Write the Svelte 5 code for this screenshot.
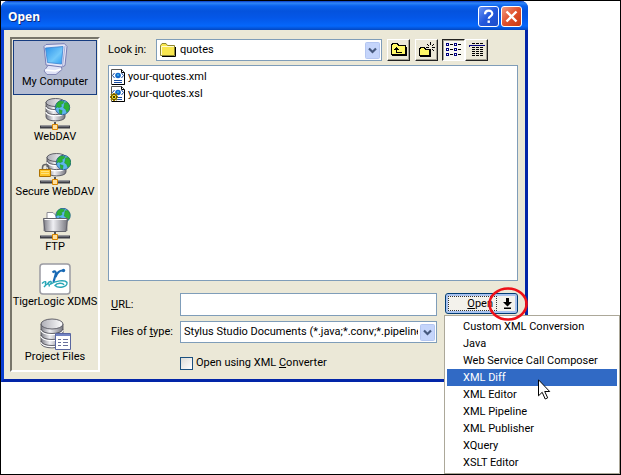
<script>
  const places = [
    { name: 'My Computer', icon: 'computer' },
    { name: 'WebDAV', icon: 'webdav' },
    { name: 'Secure WebDAV', icon: 'secure' },
    { name: 'FTP', icon: 'ftp' },
    { name: 'TigerLogic XDMS', icon: 'tiger' },
    { name: 'Project Files', icon: 'project' }
  ];
  const files = [
    { name: 'your-quotes.xml', gear: false },
    { name: 'your-quotes.xsl', gear: true }
  ];
  const tools = [
    { id: 'up', label: 'Up one level' },
    { id: 'new', label: 'Create new folder' },
    { id: 'list', label: 'List' },
    { id: 'details', label: 'Details' }
  ];
  const editors = [
    'Custom XML Conversion', 'Java', 'Web Service Call Composer', 'XML Diff', 'XML Editor',
    'XML Pipeline', 'XML Publisher', 'XQuery', 'XSLT Editor'
  ];
  let place = $state('My Computer');
  let view = $state('list');
  let editor = $state('XML Diff');
  let url = $state('');
</script>

{#snippet globe(x, y)}
  <g transform="translate({x} {y})">
    <circle cx="7.5" cy="7.5" r="7.2" fill="#5fb4ee" stroke="#34679c" />
    <path d="M2 3 5 1l4 .4-1 2.2-2 1 .6 2-2.400 1.200L2.600 7 .8 8zM9.500 2.800l3-.3 2 3.500-.4 4-2.300 2.500-1.200-3.300-2-1.200.6-3zM4 9.500l3.200 1-.6 3.500-2-.6z" fill="#2eb135" stroke="#178a2a" stroke-width=".4" />
  </g>
{/snippet}

{#snippet drum(x, y)}
  <g transform="translate({x} {y})" stroke="#55555d" stroke-width=".9">
    <path d="M1 4v15c0 5.200 19 5.200 19 0V4z" fill="url(#steel)" />
    <path d="M1 9c1 4.800 18 4.800 19 0M1 14c1 4.800 18 4.800 19 0" fill="none" stroke="#fff" stroke-width="1.400" />
    <path d="M1 8c1 4.800 18 4.800 19 0M1 13c1 4.800 18 4.800 19 0" fill="none" />
    <ellipse cx="10.500" cy="4.500" rx="9.500" ry="4" fill="url(#lid)" />
  </g>
{/snippet}

{#snippet wire()}
  <path d="M16 24v4" stroke="#555" stroke-width="2" />
  <path d="M1 27.500h30v3H1z" fill="#3d3e46" />
  <path d="M2 28h28" stroke="#9a9aa2" />
  <path d="M13.500 26.500h5v5h-5z" fill="#ffe0a0" stroke="#d98500" />
{/snippet}

{#snippet chevron()}
  <svg class="chevron" width="15" height="17" viewBox="0 0 15 17" aria-hidden="true">
    <rect x=".5" y=".5" width="14" height="16" rx="1" fill="#c5d5fb" stroke="#b4c6f1" />
    <path d="m4 6.500 3.500 3.500L11 6.500" fill="none" stroke="#46597e" stroke-width="2.200" />
  </svg>
{/snippet}

<svg class="defs" width="0" height="0" aria-hidden="true">
  <defs>
    <linearGradient id="steel"><stop offset="0" stop-color="#7c7c84" /><stop offset=".4" stop-color="#f0f0f4" /><stop offset="1" stop-color="#77777f" /></linearGradient>
    <linearGradient id="lid"><stop offset="0" stop-color="#aeaeb6" /><stop offset="1" stop-color="#fff" /></linearGradient>
    <linearGradient id="screen" x2="1" y2="1"><stop offset="0" stop-color="#2a92ea" /><stop offset=".6" stop-color="#72c8fa" /><stop offset="1" stop-color="#2c9cf0" /></linearGradient>
  </defs>
</svg>

<div class="page">
  <section class="dialog" aria-label="Open">
    <header>
      <h1>Open</h1>
      <button class="cap help" aria-label="Help">
        <svg width="19" height="19" viewBox="0 0 19 19"><path d="M6 7.200c0-4.600 7.300-4.600 7.300-.4 0 2.600-3.600 2.600-3.600 5" fill="none" stroke="#fff" stroke-width="2.200" /><path d="M8.500 13.500h2.400v2.400H8.500z" fill="#fff" /></svg>
      </button>
      <button class="cap close" aria-label="Close">
        <svg width="19" height="19" viewBox="0 0 19 19"><path d="m4.500 4.500 10 10m0-10-10 10" stroke="#fff" stroke-width="2.400" /></svg>
      </button>
    </header>

    <div class="body">
      <nav aria-label="Places">
        {#each places as p}
          <button class="place" class:current={place === p.name} onclick={() => (place = p.name)}>
            <svg width="32" height="32" viewBox="0 0 32 32" aria-hidden="true">
              {#if p.icon === 'computer'}
                <path d="M9 22.500h13l1 4-6 5H8l-3-3.500z" fill="#dfe2f6" stroke="#8287b5" />
                <path d="m6 27 10 1 6-2" fill="none" stroke="#fff" stroke-width="1.500" />
                <path d="M5 3.500 7 1.500l18.500-.8L28 3.500l-2 19-3 1.500L7 22z" fill="#e5e7f8" stroke="#777db4" />
                <path d="m26 3-2.500 20.500" stroke="#a6abd4" />
                <path d="m6.500 5 17.500-1.500L22.500 21 8.500 19.500z" fill="url(#screen)" stroke="#3c83d0" stroke-width=".8" />
              {:else if p.icon === 'webdav'}
                {@render wire()}{@render drum(6, 0)}{@render globe(16, 2)}
              {:else if p.icon === 'secure'}
                {@render wire()}{@render drum(7, 0)}{@render globe(17, 2)}
                <path d="M3.500 17v-2.500c0-4 6-4 6 0V17" fill="none" stroke="#666" stroke-width="1.500" />
                <path d="M.5 16.500h11v7H.5z" fill="#ffc629" stroke="#ae7200" />
                <path d="M2 18.500h8m-8 2h8" stroke="#ffe37a" />
              {:else if p.icon === 'ftp'}
                {@render wire()}
                <path d="M8 13V4.500h6L17.500 8v6" fill="#fff" stroke="#8c8c94" />
                {@render globe(16.500, 0)}
                <path d="M4.500 10.500h24V23h-24z" fill="#8c8c94" />
                <path d="M4.500 10.500h24l-1.500 13H6z" fill="url(#steel)" stroke="#64646c" />
                <path d="M5.500 11.500h22" stroke="#fff" />
              {:else if p.icon === 'tiger'}
                <rect x="1" y="1" width="30" height="30" rx="3" fill="#fff" stroke="#9b9ba2" stroke-width="1.500" />
                <path d="M13.500 9.500c2.500-2 4-1 3 2.500L14.500 19M16.500 14c1.500-4 4-6.500 7-6.500" fill="none" stroke="#1869b4" stroke-width="2.200" />
                <circle cx="24.500" cy="7.500" r="1.700" fill="#1869b4" />
                <path d="M3 20.500c3-3 5-2 3 1m2 0c3-5 6-3 3 0 5-4 15-5 17-2 1 5-9 6-12 3 2-3 8-3 9-.5M5 24c4-5 6-3 5-.5" fill="none" stroke="#27a6b6" stroke-width="1.400" />
              {:else}
                <g stroke="#55555d" stroke-width=".9">
                  <path d="M2 6v19c0 6.500 22 6.500 22 0V6z" fill="url(#steel)" />
                  <path d="M2 12c1 6 21 6 22 0M2 18c1 6 21 6 22 0M2 24c1 6 21 6 22 0" fill="none" stroke="#fff" stroke-width="1.500" />
                  <path d="M2 11c1 6 21 6 22 0M2 17c1 6 21 6 22 0M2 23c1 6 21 6 22 0" fill="none" />
                  <ellipse cx="13" cy="6" rx="11" ry="5" fill="url(#lid)" />
                </g>
                <path d="M16.500 15.500h15v16h-15z" fill="#fff" stroke="#5966a0" />
                <path d="M17 17h14" stroke="#7384c4" stroke-width="2" />
                <path d="M19 21.500h3m2 0h5m-10 3h3m2 0h5m-10 3h3m2 0h5" stroke="#68709b" />
              {/if}
            </svg>
            <span>{p.name}</span>
          </button>
        {/each}
      </nav>

      <main>
        <div class="lookin">
          <label for="look">Look <u>i</u>n:</label>
          <div class="combo folder">
            <svg class="mini" width="16" height="14" viewBox="0 0 16 14" aria-hidden="true">
              <path d="M2 13.500h13.500V4" fill="none" stroke="#000" />
              <path d="M.5 12.500v-10l1.500-2h4l1.500 2h7v10z" fill="#f8e64e" stroke="#8d8632" />
              <path d="M1.500 12V3.500H14" fill="none" stroke="#fffbd0" />
            </svg>
            <select id="look"><option>quotes</option></select>
            {@render chevron()}
          </div>
          <div class="tools">
            {#each tools as t}
              <button class={['tool', t.id, view === t.id && 'pressed']} aria-label={t.label}
                onclick={() => { if (t.id === 'list' || t.id === 'details') view = t.id; }}>
                <svg width="18" height="16" viewBox="0 0 18 16" shape-rendering="crispEdges">
                  {#if t.id === 'up'}
                    <path d="M1.500 12.500v-9l1-2h5l1 2h7v9z" fill="#fff867" stroke="#000" />
                    <path d="M2 13.500h14.500V5" fill="none" stroke="#000" />
                    <path d="M6.500 5v5.500H12M4 7.500h5M5 6.500h3" fill="none" stroke="#000" />
                  {:else if t.id === 'new'}
                    <path d="M1.500 13.500v-6l1-2h4l1 2h4v6z" fill="#fff867" stroke="#000" />
                    <path d="M2 14.500h10.500V8" fill="none" stroke="#000" />
                    <path d="M12.500 0v3m0 4v2M8 5.500h3m3 0h3M9 2l2 2m3 3 2 2m0-7-2 2" fill="none" stroke="#000" />
                  {:else if t.id === 'list'}
                    <path d="M1.500 1.500h2v2h-2zM1.500 6.500h2v2h-2zM1.500 11.500h2v2h-2zM9.500 1.500h2v2h-2zM9.500 6.500h2v2h-2zM9.500 11.500h2v2h-2z" fill="#fff" stroke="#000080" />
                    <path d="M5 2.500h3m5 0h3m-11 5h3m5 0h3m-11 5h3m5 0h3" stroke="#000" />
                  {:else}
                    <path d="M4 1.500h3m1 0h3m1 0h3" stroke="#000" />
                    <path d="M1 3.500h16M1.500 3v2" stroke="#000080" />
                    <path d="M4 5.500h3m1 0h3m1 0h3M4 7.500h3m1 0h3m1 0h3M4 9.500h3m1 0h3m1 0h3M4 11.500h3m1 0h3m1 0h3M4 13.500h3m1 0h3m1 0h3" stroke="#000" />
                  {/if}
                </svg>
              </button>
            {/each}
          </div>
        </div>

        <ul class="files">
          {#each files as f}
            <li>
              <svg width="16" height="16" viewBox="0 0 16 16" aria-hidden="true">
                <path d="M1.500 15.500V.5h10l3 3v12z" fill="#fff" stroke="#555" />
                <path d="M14.500 4v11.500H2M11.500.5v3h3" fill="none" stroke="#000" />
                <circle cx="8" cy="6.500" r="2.800" fill="#1268cd" />
                <path d="M7 5.500h2v1H7z" fill="#5ae0f3" />
                <path d="M4.500 4 2.500 6.500 4.500 9m7-5 2 2.500-2 2.500M4 11.500h8m-8 2h8" fill="none" stroke="#174aa0" />
                {#if f.gear}
                  <path d="M4 7v8M0 11h8M1 8l6 6m0-6-6 6" stroke="#a28100" stroke-width="2" />
                  <circle cx="4" cy="11" r="2.600" fill="#ffe928" stroke="#594a00" /><circle cx="4" cy="11" r="1" />
                {/if}
              </svg>
              <span>{f.name}</span>
            </li>
          {/each}
        </ul>

        <div class="fields">
          <label for="url"><u>U</u>RL:</label>
          <input id="url" type="text" bind:value={url} />
          <div class="split">
            <button class="open"><span><u>O</u>pen</span></button>
            <button class="drop" aria-label="Open with" aria-haspopup="menu">
              <svg width="9" height="11" viewBox="0 0 9 11"><path d="M3 0h3v4h3L4.500 8.500 0 4h3zM1 9.500h7V11H1z" /></svg>
            </button>
            <div class="menu" role="menu">
              {#each editors as e}
                <button role="menuitem" class:hot={editor === e} onmouseenter={() => (editor = e)}>{e}</button>
              {/each}
              <svg class="pointer" width="13" height="21" viewBox="0 0 13 21" aria-hidden="true"><path d="M.5.800v16l3.700-3.500 3 6.700 2.500-1.200-3-6.300h5z" fill="#fff" stroke="#000" /></svg>
            </div>
            <svg class="ring" width="42" height="36" viewBox="0 0 42 36" aria-hidden="true"><ellipse cx="21" cy="18" rx="18.500" ry="15.500" fill="none" stroke="#ee1018" stroke-width="2.600" /></svg>
          </div>

          <label for="type">Files of <u>t</u>ype:</label>
          <div class="combo type">
            <select id="type"><option>Stylus Studio Documents (*.java;*.conv;*.pipeline;*.xml)</option></select>
            {@render chevron()}
          </div>

          <label class="convert"><input type="checkbox" /><span>Open using XML <u>C</u>onverter</span></label>
        </div>
      </main>
    </div>
  </section>
</div>

<style>
  .defs { position: absolute; }
  .page {
    box-sizing: border-box;
    min-height: 100vh;
    border: 1px solid #000;
    background: #fff;
    color: #000;
    font: 11px/14px Roboto, "Liberation Sans", Arial, sans-serif;
  }
  .page * { box-sizing: border-box; }
  button, input, select { font: inherit; color: inherit; margin: 0; padding: 0; }
  svg { display: block; flex: none; }
  .dialog {
    margin-right: 92px;
    border: 3px solid #0a3fd2;
    border-top: 0;
    border-right-color: #0225a8;
    border-bottom-color: #0225a8;
    border-radius: 7px 7px 0 0;
    background: #ebe8d7;
  }
  header {
    display: flex;
    align-items: center;
    gap: 2px;
    height: 29px;
    margin: 0 -3px;
    padding: 2px 6px 0 7px;
    border-radius: 7px 7px 0 0;
    background: linear-gradient(#0a3bc4 0, #2f86f8 2px, #0a62ee 5px, #0453dd 10px, #0457e8 17px, #0567fb 25px, #0447c0 29px);
  }
  h1 {
    flex: 1;
    margin: 0;
    color: #fff;
    font: bold 12px/18px "Noto Sans", "Open Sans", sans-serif;
    text-shadow: 1px 1px #0a2a80;
  }
  .cap { display: grid; place-items: center; width: 21px; height: 21px; border: 1px solid #fff; border-radius: 3px; }
  .help { background: linear-gradient(135deg, #6a94f5, #2257dc 50%, #1c4cc8); }
  .close { background: linear-gradient(135deg, #f29a80, #e0502c 50%, #c83a12); }
  .body { display: flex; gap: 8px; padding: 7px 7px 7px 6px; }
  nav {
    flex: 0 0 90px;
    min-width: 0;
    padding: 1px 1px 0;
    border: 2px solid #fff;
    border-top-color: #77756a;
    border-left-color: #77756a;
  }
  .place {
    display: flex;
    flex-direction: column;
    align-items: center;
    width: 100%;
    height: 55px;
    padding-top: 2px;
    border: 1px solid transparent;
    background: none;
    white-space: nowrap;
  }
  .place.current { border-color: #163c80; background: #b5bdd3; }
  main { flex: 1; min-width: 0; padding-top: 2px; }
  .lookin { display: flex; align-items: center; }
  .lookin label { flex: 0 0 48px; }
  .combo { position: relative; flex: 1; height: 22px; }
  select {
    display: block;
    width: 100%;
    height: 22px;
    padding: 0 18px 0 3px;
    border: 1px solid #7f9db9;
    border-radius: 0;
    background: #fff;
    appearance: none;
    overflow: hidden;
  }
  .folder select { padding-left: 23px; }
  .mini { position: absolute; left: 4px; top: 4px; }
  .chevron { position: absolute; right: 2px; top: 3px; pointer-events: none; }
  .tools { display: flex; margin: 0 30px 0 5px; }
  .tool {
    display: grid;
    place-items: center;
    width: 23px;
    height: 22px;
    border: 1px solid #222;
    border-top-color: #fff;
    border-left-color: #fff;
    background: #ebe8d7;
    box-shadow: inset -1px -1px #a5a294;
  }
  .tool.new { margin: 0 4px 0 5px; }
  .pressed {
    border: 1px solid #fff;
    border-top-color: #222;
    border-left-color: #222;
    background: #f8f7f0;
    box-shadow: inset 1px 1px #a5a294;
  }
  .files {
    height: 216px;
    margin: 4px 0 12px;
    padding: 2px 1px;
    border: 1px solid #7f9db9;
    background: #fff;
    list-style: none;
  }
  .files li { display: flex; align-items: center; gap: 2px; height: 17px; }
  .fields {
    display: grid;
    grid-template-columns: 72px 1fr 81px;
    row-gap: 5px;
    align-items: center;
  }
  .fields > label { padding-left: 3px; }
  #url { width: 100%; height: 23px; padding: 0 3px; border: 1px solid #7f9db9; background: #fff; }
  .split {
    position: relative;
    display: flex;
    align-self: start;
    height: 21px;
    margin-left: 8px;
    border: 1px solid #003c74;
    border-radius: 3px;
    background: #f3f2ec;
    box-shadow: inset 0 0 0 2px #a9c3ef;
  }
  .open { flex: 1; margin: 2px 0 2px 2px; border: 1px dotted #333; background: none; line-height: 13px; text-align: right; }
  .open span { margin-right: 3px; }
  .drop { display: grid; place-items: center; width: 20px; border: 0; background: none; }
  .menu {
    position: absolute;
    z-index: 1;
    left: -2px;
    top: 21px;
    width: 176px;
    padding: 2px;
    border: 1px solid #aca899;
    background: #fff;
    line-height: 17px;
  }
  .menu button {
    display: block;
    width: 100%;
    height: 17px;
    padding-left: 16px;
    border: 0;
    background: none;
    text-align: left;
    white-space: nowrap;
  }
  .menu .hot { background: #316ac5; color: #fff; }
  .pointer { position: absolute; left: 93px; top: 63px; }
  .ring { position: absolute; z-index: 2; left: 41px; top: -8px; pointer-events: none; }
  .type { grid-column: 2; }
  .fields > .convert { grid-column: 2; display: flex; align-items: center; gap: 3px; margin-top: 8px; padding: 0; }
  .convert input {
    width: 13px;
    height: 13px;
    border: 1px solid #1c5180;
    background: linear-gradient(135deg, #dcdcd7, #fff);
    appearance: none;
  }
</style>
